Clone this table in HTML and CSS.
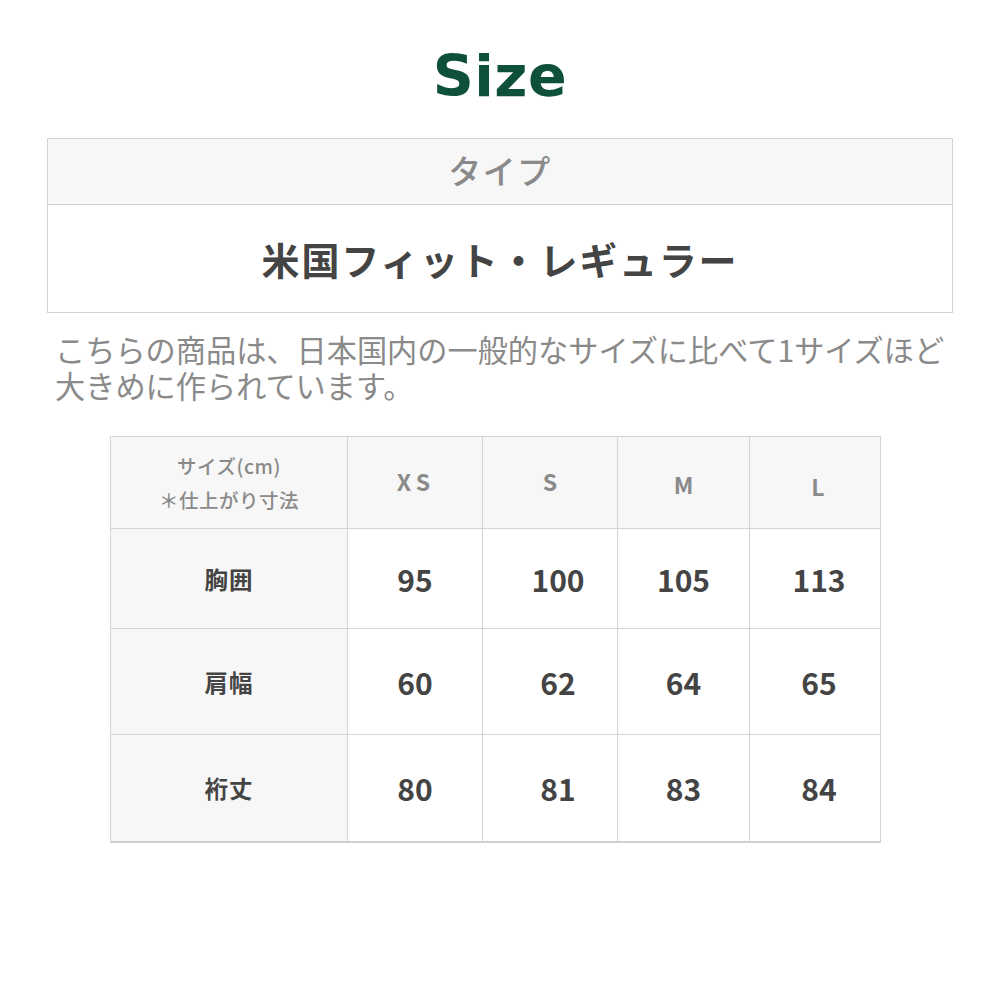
FILE: index.html
```html
<!DOCTYPE html>
<html lang="ja">
<head>
<meta charset="utf-8">
<link rel="stylesheet" href="styles.css">
</head>
<body>
<main class="page">
  <h1 class="title">Size</h1>
  <section class="type-box">
    <div class="type-head">タイプ</div>
    <div class="type-body">米国フィット・レギュラー</div>
  </section>
  <p class="note">こちらの商品は、日本国内の一般的なサイズに比べて1サイズほど大きめに作られています。</p>
  <table class="size-table">
    <colgroup>
      <col class="c0"><col class="c1"><col class="c2"><col class="c3"><col class="c4">
    </colgroup>
    <thead>
      <tr class="head-row">
        <th class="corner">サイズ(cm)<br>＊仕上がり寸法</th>
        <th class="sz xs">XS</th>
        <th class="sz">S</th>
        <th class="sz sz-m">M</th>
        <th class="sz sz-l">L</th>
      </tr>
    </thead>
    <tbody>
      <tr class="r1"><th class="label">胸囲</th><td>95</td><td class="col-s">100</td><td>105</td><td class="col-l">113</td></tr>
      <tr class="r2"><th class="label">肩幅</th><td>60</td><td class="col-s">62</td><td>64</td><td class="col-l">65</td></tr>
      <tr class="r3"><th class="label">裄丈</th><td>80</td><td class="col-s">81</td><td>83</td><td class="col-l">84</td></tr>
    </tbody>
  </table>
</main>
</body>
</html>
```
FILE: styles.css
```css
html, body {
  margin: 0;
  padding: 0;
  background: #ffffff;
}
.page {
  width: 1000px;
  height: 1000px;
  font-family: "Noto Sans CJK JP", "Noto Sans", sans-serif;
  box-sizing: border-box;
  padding-top: 38px;
}
.title {
  margin: 0;
  text-align: center;
  font-family: "DejaVu Sans", sans-serif;
  font-weight: 700;
  font-size: 57px;
  line-height: 76px;
  color: #0f5038;
  letter-spacing: 0.5px;
}
.type-box {
  margin: 24px 47px 0 47px;
  border: 1px solid #d2d2d2;
}
.type-head {
  height: 66px;
  background: #f7f7f7;
  border-bottom: 1px solid #d2d2d2;
  display: flex;
  align-items: center;
  justify-content: center;
  font-size: 33px;
  color: #8a8a8a;
  font-weight: 500;
  letter-spacing: 1.5px;
  padding-bottom: 3px;
  box-sizing: border-box;
}
.type-body {
  height: 107px;
  display: flex;
  align-items: center;
  justify-content: center;
  font-size: 38px;
  font-weight: 700;
  color: #444444;
  letter-spacing: 1.8px;
}
.note {
  margin: 18px 0 0 55px;
  width: 900px;
  font-size: 30.2px;
  line-height: 36px;
  color: #8a8a8a;
  font-weight: 400;
}
.size-table {
  margin: 33px 0 0 110px;
  width: 770px;
  border-collapse: collapse;
  table-layout: fixed;
  border-right: 1px solid #c4c4c4;
  border-bottom: 2px solid #d0d0d0;
}
.c0 { width: 237px; }
.c1 { width: 135px; }
.c2 { width: 135px; }
.c3 { width: 132px; }
.c4 { width: 131px; }
.size-table th,
.size-table td {
  border: 1px solid #d4d4d4;
  text-align: center;
  vertical-align: middle;
  padding: 0;
}
.head-row { height: 92px; }
.r1 { height: 100px; }
.r2 { height: 106px; }
.r3 { height: 107px; }
.head-row th {
  background: #f7f7f7;
  color: #8a8a8a;
}
.corner {
  font-size: 19.5px;
  line-height: 34px;
  font-weight: 500;
  letter-spacing: 0.5px;
}
.sz {
  font-size: 23px;
  font-weight: 700;
  padding-bottom: 4px !important;
}
.sz-m { padding-top: 6px !important; }
.sz-l { padding-top: 10px !important; padding-left: 6px !important; }
.xs { letter-spacing: 5px; text-indent: 2px; }
.label {
  background: #f7f7f7;
  color: #444444;
  font-size: 23.5px;
  font-weight: 700;
  letter-spacing: 1px;
}
.size-table td {
  color: #444444;
  font-size: 30px;
  font-weight: 700;
  background: #ffffff;
}
.size-table td.col-s { padding-left: 16px; }
.size-table td.col-l { padding-left: 8px; }
```
